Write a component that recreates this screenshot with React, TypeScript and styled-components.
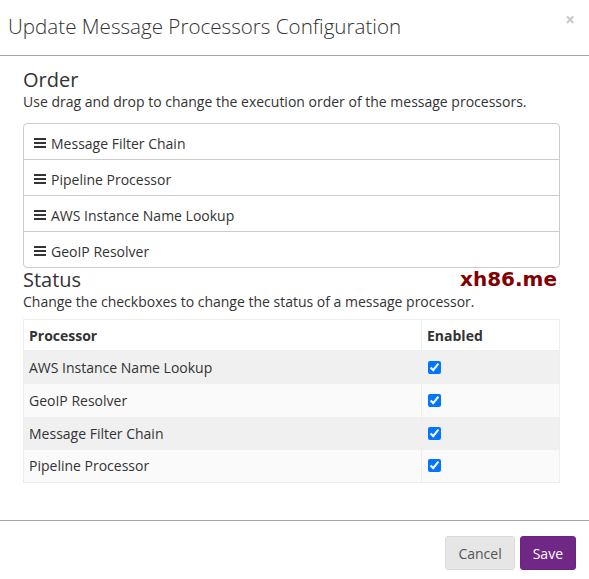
import React from "react";
import styled, { createGlobalStyle } from "styled-components";

const Global = createGlobalStyle`
  html, body { margin: 0; padding: 0; background: #fff; }
  body { font-family: "Open Sans", "Noto Sans", sans-serif; color: #333; font-size: 14px; }
  * { box-sizing: border-box; }
`;

const Modal = styled.div`
  position: relative;
  width: 589px;
  height: 579px;
  display: flex;
  flex-direction: column;
  background: #fff;
`;

const Header = styled.div`
  height: 56px;
  border-bottom: 1px solid #a6a6a6;
  display: flex;
  align-items: center;
  justify-content: space-between;
  padding: 0 14px 4px 8px;
`;

const Title = styled.h1`
  margin: 0;
  font-size: 20.6px;
  font-weight: 300;
  color: #333;
`;

const Close = styled.span`
  color: #c8c8c8;
  font-size: 17px;
  font-weight: 700;
  line-height: 1;
  margin-top: -12px;
`;

const Body = styled.div`
  flex: 1;
  padding: 12px 29px 0 23px;
  display: flex;
  flex-direction: column;
`;

const SectionTitle = styled.h2`
  margin: 0;
  font-size: 20px;
  font-weight: 400;
  line-height: 24px;
  color: #333;
`;

const Help = styled.p`
  margin: 0;
  font-size: 14px;
  line-height: 20px;
  color: #333;
`;

const List = styled.ul`
  list-style: none;
  margin: 11px 0 0 0;
  padding: 0;
  border: 1px solid #ccc;
  border-radius: 4px;
`;

const Item = styled.li<{ $last?: boolean }>`
  height: ${(p) => (p.$last ? "35px" : "36px")};
  display: flex;
  align-items: center;
  gap: 5px;
  padding: 3px 10px 0;
  font-size: 14px;
  color: #333;
  border-bottom: ${(p) => (p.$last ? "none" : "1px solid #ccc")};
`;

const Table = styled.table`
  margin-top: 7px;
  width: 100%;
  border-collapse: collapse;
  border: 1px solid #eee;
  font-size: 14px;
`;

const Th = styled.th<{ $w?: string }>`
  text-align: left;
  font-weight: 700;
  padding: 0 5px;
  height: 31px;
  width: ${(p) => p.$w || "auto"};
  border: 1px solid #eee;
  color: #333;
`;

const Tr = styled.tr<{ $odd: boolean }>`
  background: ${(p) => (p.$odd ? "#f0f0f0" : "#fafafa")};
`;

const Td = styled.td`
  padding: 0 5px;
  height: 33px;
  border-right: 1px solid #eee;
  color: #333;
`;

const Check = styled.input`
  margin: 4px 0 0 1px;
  width: 13px;
  height: 13px;
  accent-color: #0075ff;
`;

const Footer = styled.div`
  height: 59px;
  border-top: 1px solid #a6a6a6;
  display: flex;
  justify-content: flex-end;
  align-items: flex-start;
  gap: 5px;
  padding: 15px 13px 0 0;
`;

const Button = styled.button<{ $primary?: boolean }>`
  height: 34px;
  padding: 0 12px;
  font-family: inherit;
  font-size: 14px;
  border-radius: 3px;
  border: 1px solid ${(p) => (p.$primary ? "#6a2580" : "#dadada")};
  background: ${(p) => (p.$primary ? "#702785" : "#e6e6e6")};
  color: ${(p) => (p.$primary ? "#fff" : "#555")};
`;

const Watermark = styled.div`
  position: absolute;
  left: 460px;
  top: 267px;
  font-family: "DejaVu Sans", sans-serif;
  font-size: 20px;
  font-weight: 700;
  color: #800000;
`;

const Bars = () => (
  <svg width="12" height="12" viewBox="0 0 12 12">
    <rect x="0" y="1" width="12" height="2" fill="#333" />
    <rect x="0" y="5" width="12" height="2" fill="#333" />
    <rect x="0" y="9" width="12" height="2" fill="#333" />
  </svg>
);

const order = ["Message Filter Chain", "Pipeline Processor", "AWS Instance Name Lookup", "GeoIP Resolver"];
const status = ["AWS Instance Name Lookup", "GeoIP Resolver", "Message Filter Chain", "Pipeline Processor"];

export default function App() {
  return (
    <>
      <Global />
      <Modal>
        <Header>
          <Title>Update Message Processors Configuration</Title>
          <Close>×</Close>
        </Header>
        <Body>
          <SectionTitle>Order</SectionTitle>
          <Help>Use drag and drop to change the execution order of the message processors.</Help>
          <List>
            {order.map((o, i) => (
              <Item key={o} $last={i === order.length - 1}>
                <Bars />
                {o}
              </Item>
            ))}
          </List>
          <SectionTitle>Status</SectionTitle>
          <Help>Change the checkboxes to change the status of a message processor.</Help>
          <Table>
            <thead>
              <tr>
                <Th>Processor</Th>
                <Th $w="138px">Enabled</Th>
              </tr>
            </thead>
            <tbody>
              {status.map((s, i) => (
                <Tr key={s} $odd={i % 2 === 0}>
                  <Td>{s}</Td>
                  <Td>
                    <Check type="checkbox" defaultChecked />
                  </Td>
                </Tr>
              ))}
            </tbody>
          </Table>
        </Body>
        <Footer>
          <Button>Cancel</Button>
          <Button $primary>Save</Button>
        </Footer>
        <Watermark>xh86.me</Watermark>
      </Modal>
    </>
  );
}
